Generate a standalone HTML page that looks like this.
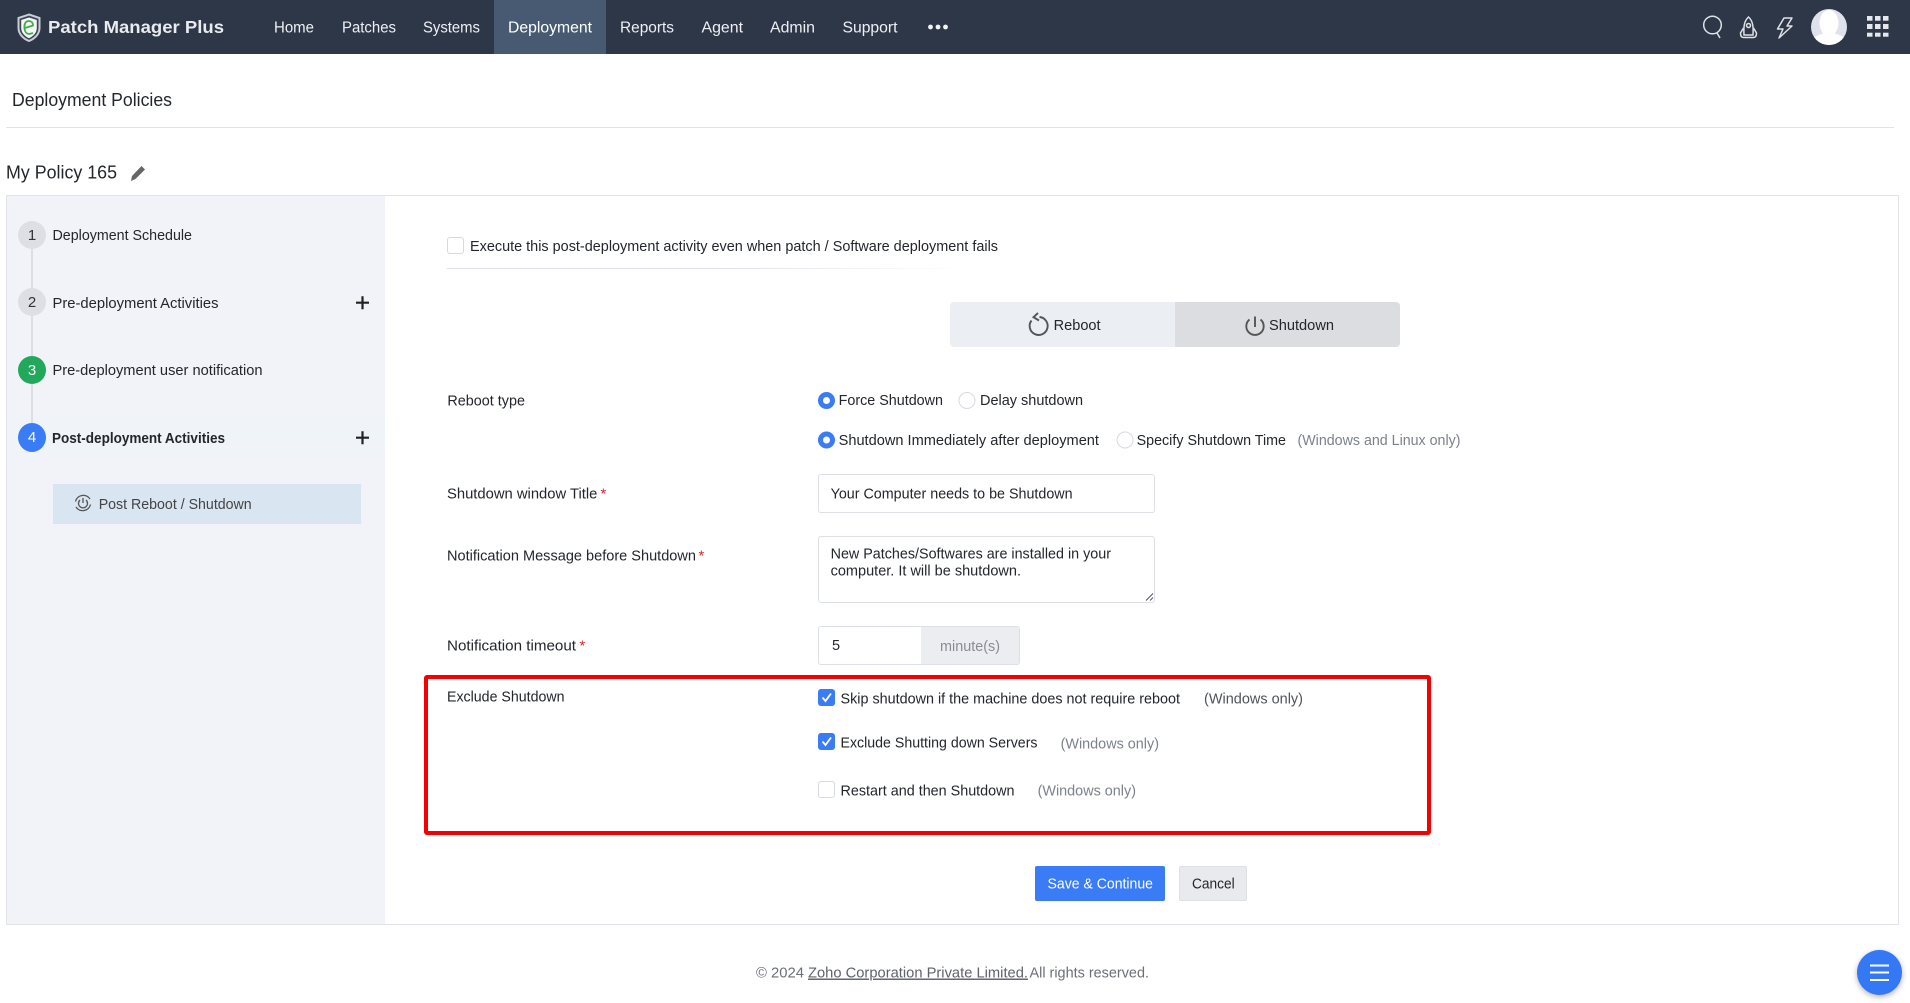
<!DOCTYPE html>
<html lang="en">
<head>
<meta charset="utf-8">
<title>Patch Manager Plus - Deployment Policies</title>
<style>
html,body{margin:0;padding:0;background:#fff;width:1910px;height:1003px;overflow:hidden}
body{position:relative;font-family:"Liberation Sans",sans-serif}
.b{position:absolute;box-sizing:border-box}
svg{position:absolute;left:0;top:0}
text{font-family:"Liberation Sans",sans-serif;font-size:14.5px;fill:#23262b}
.nav{fill:#eef0f3;font-size:15.5px}
.g{fill:#7c828a}
.cb{width:17px;height:17px;border:1px solid #d6d9e0;border-radius:3px;background:#fff}
.cbon{width:17px;height:17px;border-radius:3px;background:#3a7bf6}
</style>
</head>
<body>
<div class="b" style="left:0;top:0;width:1910px;height:54px;background:#2d3748"></div>
<div class="b" style="left:494px;top:0;width:112px;height:54px;background:#475a72"></div>
<div class="b" style="left:6px;top:127px;width:1888px;height:1px;background:#e3e3e3"></div>
<div class="b" style="left:6px;top:195px;width:1893px;height:730px;border:1px solid #e2e3e9;background:#fff"></div>
<div class="b" style="left:7px;top:196px;width:378px;height:728px;background:#f1f3f8"></div>
<div class="b" style="left:7px;top:412px;width:378px;height:52px;background:linear-gradient(#f1f3f8,#eff4f8 40%,#f1f3f8)"></div>
<div class="b" style="left:31px;top:235px;width:2px;height:202px;background:#dcdee4"></div>
<div class="b" style="left:18px;top:221px;width:28px;height:28px;border-radius:50%;background:#dddfe4"></div>
<div class="b" style="left:18px;top:288px;width:28px;height:28px;border-radius:50%;background:#dddfe4"></div>
<div class="b" style="left:18px;top:356px;width:28px;height:28px;border-radius:50%;background:#22a85a"></div>
<div class="b" style="left:18px;top:423px;width:28px;height:29px;border-radius:50%;background:#3a7bf6"></div>
<div class="b" style="left:53px;top:484px;width:308px;height:40px;background:#d9e5f1"></div>

<div class="b" style="left:447px;top:268px;width:520px;height:1px;background:linear-gradient(90deg,#dfe0e8 50%,#fff)"></div>
<div class="b cb" style="left:447px;top:237px"></div>
<div class="b" style="left:950px;top:302px;width:450px;height:45px;border-radius:4px;overflow:hidden;background:#ebeef3"><div style="position:absolute;left:225px;top:0;width:225px;height:45px;background:#dcdde1"></div></div>

<div class="b" style="left:818px;top:474px;width:337px;height:39px;border:1px solid #dcdfe6;border-radius:3px;background:#fff"></div>
<div class="b" style="left:818px;top:536px;width:337px;height:67px;border:1px solid #dcdfe6;border-radius:3px;background:#fff"></div>
<div class="b" style="left:818px;top:626px;width:202px;height:39px;border:1px solid #dcdfe6;border-radius:3px;background:#fff;overflow:hidden"><div style="position:absolute;left:102px;top:0;width:100px;height:38px;background:#ebedf1"></div></div>

<div class="b" style="left:424px;top:675px;width:1007px;height:160px;border:4px solid #f50000;border-radius:3px"></div>
<div class="b cbon" style="left:818px;top:689px"></div>
<div class="b cbon" style="left:818px;top:733px"></div>
<div class="b cb" style="left:818px;top:781px"></div>

<div class="b" style="left:1035px;top:866px;width:130px;height:35px;border-radius:2px;background:#3a7bf6"></div>
<div class="b" style="left:1179px;top:866px;width:68px;height:35px;border-radius:2px;background:#e9eaed;border:1px solid #dfe0e3"></div>
<div class="b" style="left:1857px;top:950px;width:45px;height:45px;border-radius:50%;background:#3578f6;box-shadow:0 2px 6px rgba(0,0,0,.3)"></div>

<svg width="1910" height="1003" viewBox="0 0 1910 1003" xmlns="http://www.w3.org/2000/svg">
  <!-- logo -->
  <path d="M29 14.5 L39.5 18 V28 C39.5 34.5 34 39 29 41 C24 39 18.5 34.5 18.5 28 V18 Z" fill="#3a4656" stroke="#c9ccd1" stroke-width="2"/>
  <path d="M29 17.5 L36.8 20 V28 C36.8 33 32.8 36.5 29 38.2 C25.2 36.5 21.2 33 21.2 28 V20 Z" fill="#f4f5f6"/>
  <path d="M25 28 L33 25.5 C33 22.3 30.8 21 28.8 21 C26 21 24.4 23.4 24.4 27 C24.4 31.5 26.5 34 29.5 34 L33 33" fill="none" stroke="#3fae49" stroke-width="1.8"/>
  <text x="48" y="33" class="nav" style="font-size:17.5px;font-weight:700;fill:#e9ebee" textLength="176" lengthAdjust="spacingAndGlyphs">Patch Manager Plus</text>

  <text x="274" y="32.5" class="nav" textLength="40" lengthAdjust="spacingAndGlyphs">Home</text>
  <text x="342" y="32.5" class="nav" textLength="54" lengthAdjust="spacingAndGlyphs">Patches</text>
  <text x="423" y="32.5" class="nav" textLength="57" lengthAdjust="spacingAndGlyphs">Systems</text>
  <text x="508" y="32.5" class="nav" style="fill:#fff" textLength="84" lengthAdjust="spacingAndGlyphs">Deployment</text>
  <text x="620" y="32.5" class="nav" textLength="54" lengthAdjust="spacingAndGlyphs">Reports</text>
  <text x="701.5" y="32.5" class="nav" textLength="41.5" lengthAdjust="spacingAndGlyphs">Agent</text>
  <text x="770" y="32.5" class="nav" textLength="45" lengthAdjust="spacingAndGlyphs">Admin</text>
  <text x="842.5" y="32.5" class="nav" textLength="55" lengthAdjust="spacingAndGlyphs">Support</text>
  <g fill="#f3f4f6"><circle cx="930.5" cy="27" r="2.4"/><circle cx="938" cy="27" r="2.4"/><circle cx="945.5" cy="27" r="2.4"/></g>

  <!-- right nav icons -->
  <g fill="none" stroke="#dfe1e6" stroke-width="1.5">
    <circle cx="1712.5" cy="25" r="8.8"/><path d="M1717 33 L1720 38"/>
    <path d="M1748.5 17 C1744 21 1743.5 27 1744 35 H1753 C1753.5 27 1753 21 1748.5 17 Z"/>
    <circle cx="1748.5" cy="25.5" r="2"/>
    <path d="M1743.5 28 L1740.5 33 C1740.5 36 1741.5 37.5 1743.5 37.5 H1753.5 C1755.5 37.5 1756.5 36 1756.5 33 L1753.5 28"/>
    <path d="M1784 18 H1792 L1787 26 H1792 L1779 38 L1783 29 H1777.5 Z" stroke-linejoin="round"/>
  </g>
  <clipPath id="av"><circle cx="1829" cy="27" r="18"/></clipPath>
  <g clip-path="url(#av)">
    <rect x="1811" y="9" width="36" height="36" fill="#dfe2ec"/>
    <ellipse cx="1829" cy="23" rx="9.5" ry="13" fill="#fff"/>
    <path d="M1811 45 V40 C1814 36 1820 35 1824 33 H1834 C1838 35 1844 36 1847 40 V45 Z" fill="#fff"/>
  </g>
  <g fill="#e6e8ec">
    <rect x="1867" y="16" width="5.5" height="4.7"/><rect x="1875" y="16" width="5.5" height="4.7"/><rect x="1883" y="16" width="5.5" height="4.7"/>
    <rect x="1867" y="24" width="5.5" height="5"/><rect x="1875" y="24" width="5.5" height="5"/><rect x="1883" y="24" width="5.5" height="5"/>
    <rect x="1867" y="32.7" width="5.5" height="4"/><rect x="1875" y="32.7" width="5.5" height="4"/><rect x="1883" y="32.7" width="5.5" height="4"/>
  </g>

  <text x="12" y="106" style="font-size:18px" textLength="160" lengthAdjust="spacingAndGlyphs">Deployment Policies</text>
  <text x="6" y="178.5" style="font-size:18.5px" textLength="111" lengthAdjust="spacingAndGlyphs">My Policy 165</text>
  <path d="M141.5 166 L145 169.5 L135.5 179 L131 181 L132 176 Z" fill="#666"/>

  <!-- sidebar -->
  <g>
    <text x="32" y="240" text-anchor="middle" style="font-size:15px;fill:#333">1</text>
    <text x="32" y="307" text-anchor="middle" style="font-size:15px;fill:#333">2</text>
    <text x="32" y="375" text-anchor="middle" style="font-size:15px;fill:#fff">3</text>
    <text x="32" y="442" text-anchor="middle" style="font-size:15px;fill:#fff">4</text>
  </g>
  <text x="52.5" y="240" textLength="139.5" lengthAdjust="spacingAndGlyphs">Deployment Schedule</text>
  <text x="52.5" y="308" textLength="166" lengthAdjust="spacingAndGlyphs">Pre-deployment Activities</text>
  <text x="52.5" y="375" textLength="210" lengthAdjust="spacingAndGlyphs">Pre-deployment user notification</text>
  <text x="52" y="443" style="font-weight:700" textLength="173" lengthAdjust="spacingAndGlyphs">Post-deployment Activities</text>
  <path d="M356 302.7 H369 M362.5 296.2 V309.2 M356 437.7 H369 M362.5 431.2 V444.2" stroke="#222" stroke-width="2.2"/>
  <g fill="none" stroke="#555" stroke-width="1.3">
    <path d="M75.5 501.5 A8 8 0 0 1 90 499" />
    <path d="M90.5 504.5 A8 8 0 0 1 76 507" />
    <path d="M80 500 A4.5 4.5 0 1 0 86 500 M83 498 V503"/>
  </g>
  <text x="98.7" y="509" style="fill:#444" textLength="153" lengthAdjust="spacingAndGlyphs">Post Reboot / Shutdown</text>

  <!-- main -->
  <text x="470" y="251" textLength="528" lengthAdjust="spacingAndGlyphs">Execute this post-deployment activity even when patch / Software deployment fails</text>

  <g fill="none" stroke="#555" stroke-width="1.9">
    <path d="M1039.5 317 A9 9 0 1 1 1031.5 320.5"/>
    <path d="M1038 313 L1033.5 317.2 L1039 320.5"/>
    <path d="M1249.5 319.5 A8.7 8.7 0 1 0 1260.5 319.5"/>
    <path d="M1255 316.5 V327"/>
  </g>
  <text x="1053.6" y="330" textLength="47" lengthAdjust="spacingAndGlyphs">Reboot</text>
  <text x="1269" y="330" textLength="65" lengthAdjust="spacingAndGlyphs">Shutdown</text>

  <text x="447.4" y="405.5" textLength="77.6" lengthAdjust="spacingAndGlyphs">Reboot type</text>
  <circle cx="826.5" cy="400.5" r="6" fill="#fff" stroke="#3a7bf6" stroke-width="5"/>
  <text x="838.6" y="405" textLength="104.4" lengthAdjust="spacingAndGlyphs">Force Shutdown</text>
  <circle cx="967" cy="400.5" r="8" fill="#fff" stroke="#d6d9e0"/>
  <text x="980" y="405" textLength="103" lengthAdjust="spacingAndGlyphs">Delay shutdown</text>
  <circle cx="826.5" cy="440" r="6" fill="#fff" stroke="#3a7bf6" stroke-width="5"/>
  <text x="838.6" y="445" textLength="260.4" lengthAdjust="spacingAndGlyphs">Shutdown Immediately after deployment</text>
  <circle cx="1125" cy="440" r="8" fill="#fff" stroke="#d6d9e0"/>
  <text x="1136.6" y="445" textLength="149.4" lengthAdjust="spacingAndGlyphs">Specify Shutdown Time</text>
  <text x="1297.5" y="445" class="g" textLength="163" lengthAdjust="spacingAndGlyphs">(Windows and Linux only)</text>

  <text x="447" y="498.5" textLength="150.4" lengthAdjust="spacingAndGlyphs">Shutdown window Title</text>
  <text x="600.5" y="498.5" style="fill:#e02020">*</text>
  <text x="830.6" y="498.5" textLength="242" lengthAdjust="spacingAndGlyphs">Your Computer needs to be Shutdown</text>

  <text x="447" y="560.5" textLength="249" lengthAdjust="spacingAndGlyphs">Notification Message before Shutdown</text>
  <text x="698.5" y="560.5" style="fill:#e02020">*</text>
  <text x="830.6" y="558.5" textLength="280.4" lengthAdjust="spacingAndGlyphs">New Patches/Softwares are installed in your</text>
  <text x="830.6" y="575.5" textLength="190.4" lengthAdjust="spacingAndGlyphs">computer. It will be shutdown.</text>
  <path d="M1146 600.5 L1153 593.5 M1150 600.5 L1153 597.5" stroke="#555" stroke-width="1"/>

  <text x="447" y="650.5" textLength="129" lengthAdjust="spacingAndGlyphs">Notification timeout</text>
  <text x="579.5" y="650.5" style="fill:#e02020">*</text>
  <text x="832" y="650">5</text>
  <text x="940" y="651" style="fill:#888c92" textLength="60" lengthAdjust="spacingAndGlyphs">minute(s)</text>

  <text x="447" y="701.5" textLength="117.5" lengthAdjust="spacingAndGlyphs">Exclude Shutdown</text>

  <path d="M822.5 697.5 L825.5 701 L831 693.5 M822.5 741.5 L825.5 745 L831 737.5" fill="none" stroke="#fff" stroke-width="1.8"/>
  <text x="840.5" y="703.5" textLength="339.5" lengthAdjust="spacingAndGlyphs">Skip shutdown if the machine does not require reboot</text>
  <text x="1204" y="703.5" style="fill:#4f5359" textLength="99" lengthAdjust="spacingAndGlyphs">(Windows only)</text>
  <text x="840.5" y="747.5" textLength="197" lengthAdjust="spacingAndGlyphs">Exclude Shutting down Servers</text>
  <text x="1060.6" y="748.5" class="g" textLength="98.4" lengthAdjust="spacingAndGlyphs">(Windows only)</text>
  <text x="840.5" y="795.5" textLength="174" lengthAdjust="spacingAndGlyphs">Restart and then Shutdown</text>
  <text x="1037.6" y="795.5" class="g" textLength="98.4" lengthAdjust="spacingAndGlyphs">(Windows only)</text>

  <text x="1047.5" y="888.5" style="fill:#fff" textLength="105.5" lengthAdjust="spacingAndGlyphs">Save &amp; Continue</text>
  <text x="1192" y="888.5" textLength="42.7" lengthAdjust="spacingAndGlyphs">Cancel</text>

  <text x="756" y="977.5" class="g" style="fill:#6b6f76" textLength="48" lengthAdjust="spacingAndGlyphs">© 2024</text>
  <text x="808" y="977.5" style="fill:#5f6369;text-decoration:underline" textLength="220" lengthAdjust="spacingAndGlyphs">Zoho Corporation Private Limited.</text>
  <text x="1029.5" y="977.5" style="fill:#6b6f76" textLength="119.5" lengthAdjust="spacingAndGlyphs">All rights reserved.</text>

  <path d="M1870 965.5 H1889 M1870 972.5 H1889 M1870 980 H1889" stroke="#fff" stroke-width="2"/>
</svg>
</body>
</html>
